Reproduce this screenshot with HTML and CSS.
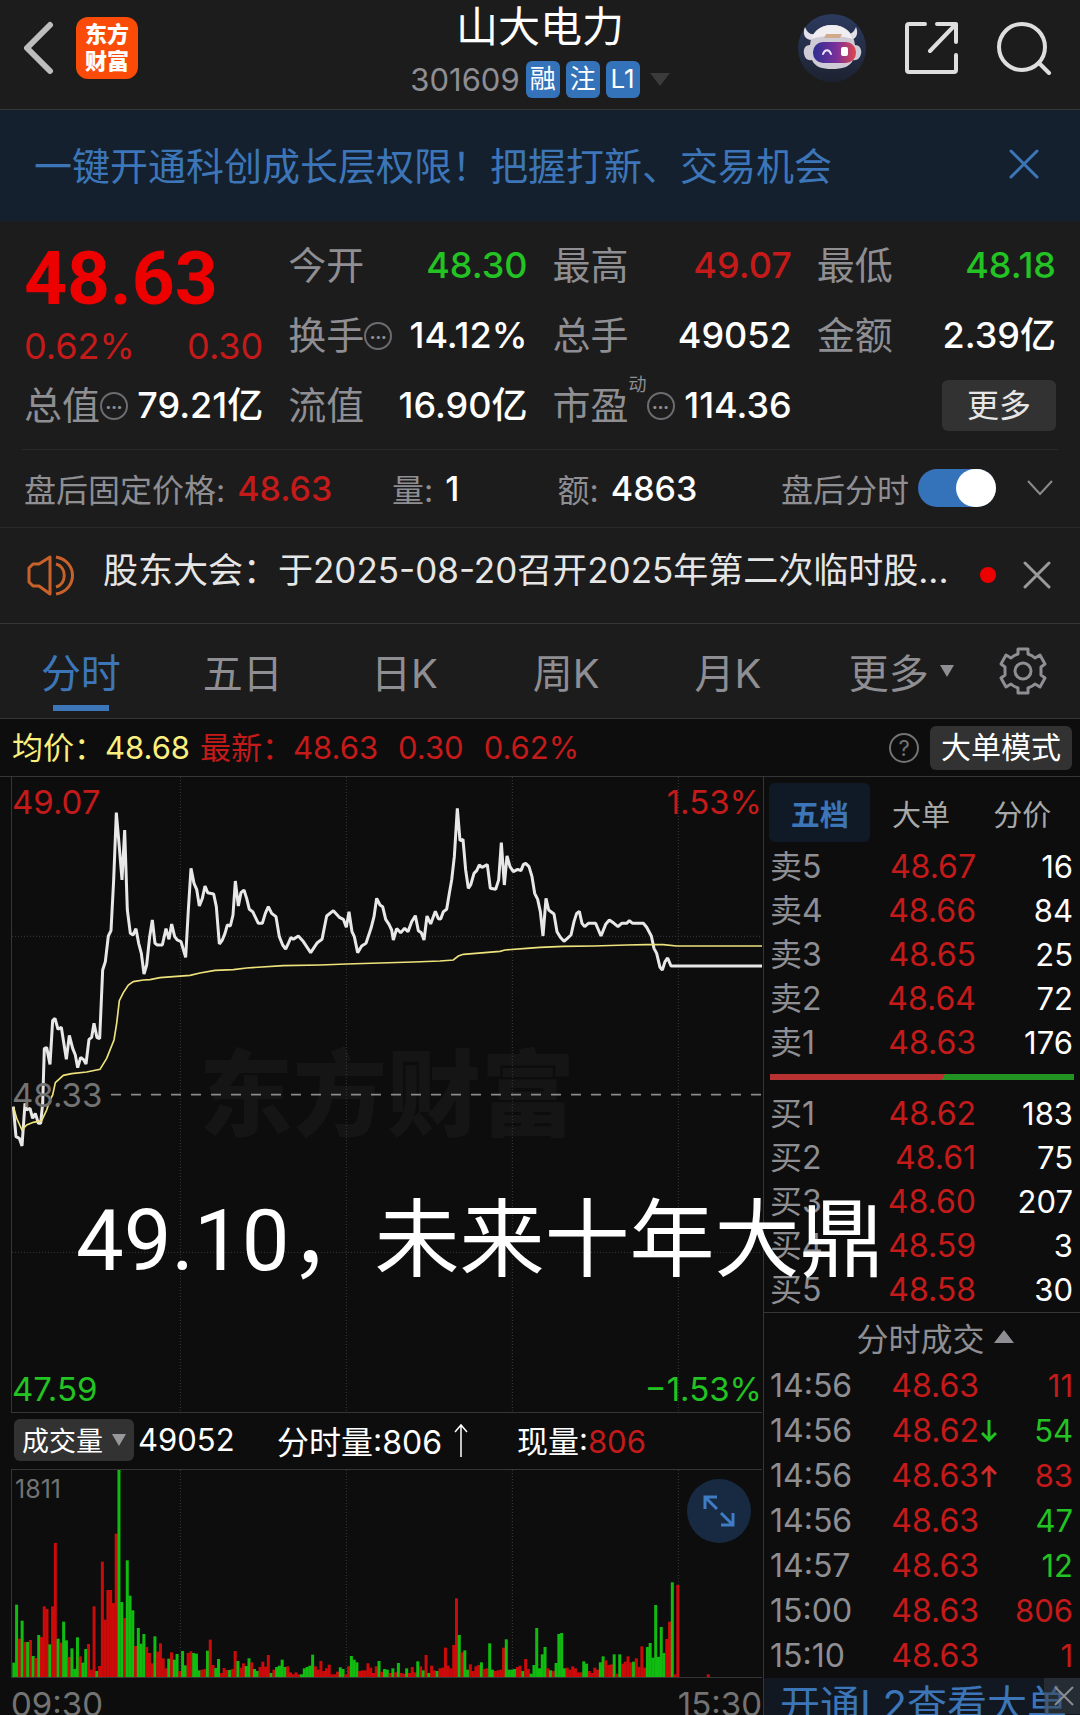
FILE: index.html
```html
<!DOCTYPE html>
<html lang="zh-CN">
<head>
<meta charset="utf-8">
<meta name="viewport" content="width=device-width, initial-scale=1">
<title>山大电力 301609</title>
<link rel="stylesheet" href="styles.css">
</head>
<body>
<header class="header">
  <div class="header-side">
    <button class="icon-btn" aria-label="返回"><svg width="32" height="54" viewBox="0 0 32 54"><path d="M27 4 4 27 27 50" fill="none" stroke="#bdbdbd" stroke-width="6" stroke-linecap="round" stroke-linejoin="round"/></svg></button>
    <a class="logo" href="#"><span>东方</span><span>财富</span></a>
  </div>
  <div class="header-title">
    <h1>山大电力</h1>
    <div class="code-row">
      <span class="code">301609</span><span class="badge">融</span><span class="badge">注</span><span class="badge">L1</span>
      <svg width="20" height="13" viewBox="0 0 20 13"><path d="M0 0h20L10 13z" fill="#3b3b3b"/></svg>
    </div>
  </div>
  <div class="header-side header-actions">
    <button class="icon-btn" aria-label="智能助手">
      <svg width="68" height="68" viewBox="0 0 68 68">
        <defs>
          <linearGradient id="visor" x1="0" x2="1"><stop offset="0" stop-color="#2c2f93"/><stop offset=".55" stop-color="#7b2f9a"/><stop offset="1" stop-color="#e0484c"/></linearGradient>
          <linearGradient id="disc" x1="0" x2="0" y1="0" y2="1"><stop offset="0" stop-color="#2c3a5e"/><stop offset="1" stop-color="#1c2231"/></linearGradient>
        </defs>
        <circle cx="34" cy="34" r="34" fill="url(#disc)"/>
        <path d="M7 13c-3 7 0 13 7 13l3-6c-5 1-8-2-10-7zM58 13c3 7 0 13-7 13l-3-6c5 1 8-2 10-7z" fill="#e4e0ea"/>
        <path d="M34 11c-13 0-21 8-22 20-5 0-7 4-6 9s4 7 8 6c3 7 10 9 20 9s18-2 21-9c4 1 7-2 8-6s-1-9-6-9c-1-12-10-20-23-20z" fill="#cfcbd6"/>
        <path d="M34 11c-11 0-18 6-21 14 12-4 30-4 42 0-3-8-10-14-21-14z" fill="#f1eef2"/>
        <path d="M28 20h16l-2 4H26z" fill="#d3a98d"/>
        <rect x="15" y="28" width="43" height="21" rx="10" fill="url(#visor)"/>
        <path d="M25 40c2-5 6-5 8 0" fill="none" stroke="#e8e6ff" stroke-width="2" stroke-linecap="round"/>
        <rect x="43" y="33" width="7" height="9" rx="2" fill="#fff"/>
      </svg>
    </button>
    <button class="icon-btn" aria-label="分享"><svg width="54" height="54" viewBox="0 0 54 54" fill="none" stroke="#dedede" stroke-width="4" stroke-linecap="round" stroke-linejoin="round"><path d="M21 3H5a2 2 0 0 0-2 2v44a2 2 0 0 0 2 2h45a2 2 0 0 0 2-2V34M33 3h19v18M52 3 26 30"/></svg></button>
    <button class="icon-btn" aria-label="搜索"><svg width="56" height="54" viewBox="0 0 56 54" fill="none" stroke="#dedede" stroke-width="4" stroke-linecap="round"><circle cx="26" cy="26" r="23"/><path d="m43 42 10 10"/></svg></button>
  </div>
</header>

<div class="banner">
  <a href="#">一键开通科创成长层权限！把握打新、交易机会</a>
  <button class="icon-btn" aria-label="关闭"><svg width="30" height="30" viewBox="0 0 30 30"><path d="m2 2 26 26M28 2 2 28" stroke="#3c76b8" stroke-width="3" stroke-linecap="round"/></svg></button>
</div>

<section class="quote">
  <div class="quote-price">
    <strong>48.63</strong>
    <div class="change"><span>0.62%</span><span>0.30</span></div>
  </div>
  <div class="stat"><span>今开</span><b class="green">48.30</b></div>
  <div class="stat"><span>最高</span><b class="red">49.07</b></div>
  <div class="stat"><span>最低</span><b class="green">48.18</b></div>
  <div class="stat"><span>换手<i class="dots">•••</i></span><b>14.12%</b></div>
  <div class="stat"><span>总手</span><b>49052</b></div>
  <div class="stat"><span>金额</span><b>2.39亿</b></div>
  <div class="stat"><span>总值<i class="dots">•••</i></span><b>79.21亿</b></div>
  <div class="stat"><span>流值</span><b>16.90亿</b></div>
  <div class="stat"><span>市盈<sup>动</sup><i class="dots">•••</i></span><b>114.36</b></div>
  <div class="stat stat-more"><button class="more-btn">更多</button></div>
</section>

<section class="after-hours">
  <div><span>盘后固定价格:</span><b class="red">48.63</b></div>
  <div><span>量:</span><b>1</b></div>
  <div><span>额:</span><b>4863</b></div>
  <label class="toggle-label">盘后分时<input class="toggle" type="checkbox" checked></label>
  <button class="icon-btn" aria-label="展开"><svg width="28" height="18" viewBox="0 0 28 18"><path d="m2 2 12 13L26 2" fill="none" stroke="#8a8a8e" stroke-width="2"/></svg></button>
</section>

<section class="notice">
  <svg width="48" height="42" viewBox="0 0 48 42" fill="none" stroke="#c9622a" stroke-width="3" stroke-linejoin="round"><path d="M23 3v37l-11-8H6l-4-4V14l4-4h6z"/><path d="M29 10c11 3 11 20 0 23M29 3c22 4 22 33 0 37"/></svg>
  <a href="#">股东大会：于2025-08-20召开2025年第二次临时股...</a>
  <i class="red-dot"></i>
  <button class="icon-btn" aria-label="关闭公告"><svg width="28" height="28" viewBox="0 0 28 28"><path d="m2 2 24 24M26 2 2 26" stroke="#9a9a9a" stroke-width="3" stroke-linecap="round"/></svg></button>
</section>

<nav class="tabs">
  <button class="tab active">分时</button>
  <button class="tab">五日</button>
  <button class="tab">日K</button>
  <button class="tab">周K</button>
  <button class="tab">月K</button>
  <button class="tab">更多<svg width="14" height="12" viewBox="0 0 14 12"><path d="M0 0h14L7 12z" fill="#8e8e93"/></svg></button>
  <button class="icon-btn" aria-label="设置"><svg width="48" height="50" viewBox="0 0 48 50" fill="none" stroke="#8e8e93" stroke-width="3" stroke-linejoin="round"><path d="M19 3h10v5c3 1 5 2 7 4l5-3 5 9-4 3v8l4 3-5 9-5-3c-2 2-4 3-7 4v5H19v-5c-3-1-5-2-7-4l-5 3-5-9 4-3v-8l-4-3 5-9 5 3c2-2 4-3 7-4z"/><circle cx="24" cy="25" r="8"/></svg></button>
</nav>

<div class="info">
  <span class="yellow">均价：48.68</span>
  <span class="red">最新：48.63</span>
  <span class="red">0.30</span>
  <span class="red">0.62%</span>
  <button class="help" aria-label="帮助">?</button>
  <button class="mode-btn">大单模式</button>
</div>

<main class="board">
  <section class="charts">
    <div class="plot price-plot">
      <span class="watermark">东方财富</span>
      <svg viewBox="36 21 2250 1905">
        <g class="grid-lines">
          <path d="M541 21V1926M1039 21V1926M1537 21V1926M2035 21V1926M36 499H2286M36 1447H2286"/>
        </g>
        <path class="base-line" d="M333 974H2286"/>
        <polyline id="price" class="price-line"/>
        <polyline id="average" class="average-line"/>
      </svg>
      <span class="mark top-left red">49.07</span>
      <span class="mark top-right red">1.53%</span>
      <span class="mark middle-left">48.33</span>
      <span class="mark bottom-left green">47.59</span>
      <span class="mark bottom-right green">−1.53%</span>
    </div>
    <div class="volume-head">
      <button class="volume-btn">成交量<svg width="14" height="12" viewBox="0 0 14 12"><path d="M0 0h14L7 12z" fill="#98989c"/></svg></button>
      <span class="total">49052</span>
      <span class="minute">分时量:806<svg width="14" height="34" viewBox="0 0 14 34"><path d="M7 34V3M1 9l6-7 6 7" fill="none" stroke="#fff" stroke-width="1.5"/></svg></span>
      <span>现量:<em class="red">806</em></span>
    </div>
    <div class="plot volume-plot">
      <svg viewBox="36 267 2250 621">
        <g class="grid-lines"><path d="M541 267V888M1039 267V888M1537 267V888M2035 267V888"/></g>
        <g id="volume"></g>
      </svg>
      <span class="peak">1811</span>
      <button class="expand" aria-label="全屏"><svg width="32" height="32" viewBox="0 0 32 32" fill="none" stroke="#3f7cc4" stroke-width="3"><path d="M2 14V2h12M2 2l12 12M18 18l12 12M30 18v12H18"/></svg></button>
    </div>
    <div class="axis"><span>09:30</span><span>15:30</span></div>
  </section>

  <aside class="panel">
    <div class="panel-tabs">
      <button class="active">五档</button><button>大单</button><button>分价</button>
    </div>
    <table class="book">
      <tr><th>卖5</th><td class="red">48.67</td><td>16</td></tr>
      <tr><th>卖4</th><td class="red">48.66</td><td>84</td></tr>
      <tr><th>卖3</th><td class="red">48.65</td><td>25</td></tr>
      <tr><th>卖2</th><td class="red">48.64</td><td>72</td></tr>
      <tr><th>卖1</th><td class="red">48.63</td><td>176</td></tr>
    </table>
    <div class="ratio"></div>
    <table class="book">
      <tr><th>买1</th><td class="red">48.62</td><td>183</td></tr>
      <tr><th>买2</th><td class="red">48.61</td><td>75</td></tr>
      <tr><th>买3</th><td class="red">48.60</td><td>207</td></tr>
      <tr><th>买4</th><td class="red">48.59</td><td>3</td></tr>
      <tr><th>买5</th><td class="red">48.58</td><td>30</td></tr>
    </table>
    <button class="trades-head">分时成交<svg width="20" height="13" viewBox="0 0 20 13"><path d="M0 13h20L10 0z" fill="#8e8e93"/></svg></button>
    <table class="trades">
      <tr><th>14:56</th><td class="red">48.63</td><td></td><td class="red">11</td></tr>
      <tr><th>14:56</th><td class="red">48.62</td><td><svg width="16" height="22" viewBox="0 0 16 22"><path d="M8 0v20M1 13l7 7 7-7" fill="none" stroke="#22c322" stroke-width="3"/></svg></td><td class="green">54</td></tr>
      <tr><th>14:56</th><td class="red">48.63</td><td><svg width="16" height="22" viewBox="0 0 16 22"><path d="M8 22V2M1 9l7-7 7 7" fill="none" stroke="#d42a2a" stroke-width="3"/></svg></td><td class="red">83</td></tr>
      <tr><th>14:56</th><td class="red">48.63</td><td></td><td class="green">47</td></tr>
      <tr><th>14:57</th><td class="red">48.63</td><td></td><td class="green">12</td></tr>
      <tr><th>15:00</th><td class="red">48.63</td><td></td><td class="red">806</td></tr>
      <tr><th>15:10</th><td class="red">48.63</td><td></td><td class="red">1</td></tr>
    </table>
    <div class="promo">
      <a href="#">开通L2查看大单</a>
      <button aria-label="关闭推广"><svg width="20" height="20" viewBox="0 0 20 20"><path d="m1 1 18 18M19 1 1 19" stroke="#8a8d91" stroke-width="2"/></svg></button>
    </div>
  </aside>

  <p class="caption">49.10，未来十年大鼎</p>
</main>
<script src="charts.js"></script>
</body>
</html>
```

FILE: styles.css
```css
* { box-sizing: border-box; }

body {
  margin: 0;
  height: 100vh;
  overflow: hidden;
  display: flex;
  flex-direction: column;
  background: #0d0d0d;
  color: #fff;
  font-family: Inter, "Noto Sans CJK SC", sans-serif;
}

button {
  font: inherit;
  color: inherit;
  background: none;
  border: 0;
  padding: 0;
}

a { color: inherit; text-decoration: none; }
svg { display: block; flex: none; }
em, i { font-style: normal; }
b { font-weight: 500; }

.red { color: #c41a1a; }
.green { color: #22c322; }
.yellow { color: #fbf07e; }

.icon-btn { display: flex; align-items: center; justify-content: center; }

/* Header */
.header {
  flex: none;
  height: 110px;
  display: grid;
  grid-template-columns: 1fr auto 1fr;
  align-items: start;
  background: #1c1c1c;
  border-bottom: 1px solid #363636;
}

.header-side { display: flex; align-items: center; height: 96px; padding-left: 23px; gap: 21px; }
.header-actions { justify-content: flex-end; gap: 38px; padding: 0 28px 0 0; }

.logo {
  width: 62px;
  height: 62px;
  border-radius: 12px;
  background: #fb4b08;
  display: flex;
  flex-direction: column;
  align-items: center;
  justify-content: center;
  font-size: 22px;
  line-height: 27px;
  font-weight: 900;
}

h1 { margin: 0; font-size: 42px; line-height: 54px; font-weight: 400; text-align: center; }
.code-row { display: flex; align-items: center; gap: 6px; height: 50px; }
.code { font-size: 31px; color: #8e8e93; }
.badge {
  min-width: 34px;
  height: 37px;
  border-radius: 6px;
  background: #3472ba;
  font-size: 26px;
  line-height: 36px;
  text-align: center;
}
.code-row svg { margin-left: 4px; }

/* Banner */
.banner {
  flex: none;
  height: 111px;
  padding: 0 41px 4px 34px;
  display: flex;
  align-items: center;
  justify-content: space-between;
  background: #14202e;
  color: #3c76b8;
  font-size: 38px;
}

/* Quote */
.quote {
  flex: none;
  padding: 10px 24px 8px;
  display: grid;
  grid-template-columns: repeat(4, 1fr);
  grid-template-rows: repeat(3, 70px);
  column-gap: 25px;
  background: #1c1c1c;
}
.quote-price { grid-row: span 2; padding-top: 13px; color: #ec0000; }
.quote-price strong { display: block; font: 700 75px/68px Roboto, sans-serif; }
.change { display: flex; justify-content: space-between; font-size: 36px; line-height: 68px; color: #c41a1a; }
.stat { display: flex; align-items: center; justify-content: space-between; white-space: nowrap; font-size: 38px; line-height: 69px; height: 69px; }
.stat > span { display: flex; align-items: center; color: #8e8e93; }
.stat b { font-size: 36px; }
.stat sup { align-self: flex-start; font-size: 18px; line-height: 28px; }
.dots {
  width: 28px;
  height: 28px;
  border: 2px solid #6c6c70;
  border-radius: 50%;
  font-size: 10px;
  line-height: 24px;
  text-align: center;
}
.stat-more { justify-content: flex-end; }
.more-btn {
  width: 114px;
  height: 51px;
  border-radius: 6px;
  background: #323232;
  color: #e6e6e6;
  font-size: 32px;
  line-height: 50px;
}

/* After-hours trading */
.after-hours {
  flex: none;
  height: 79px;
  padding: 0 26px 0 24px;
  display: grid;
  grid-template-columns: 369fr 166fr 224fr auto auto;
  align-items: center;
  background: linear-gradient(#2a2a2a, #2a2a2a) center top / calc(100% - 44px) 1px no-repeat #1c1c1c;
  border-bottom: 1px solid #2a2a2a;
  color: #8e8e93;
  font-size: 32px;
}
.after-hours > div { display: flex; align-items: center; gap: 12px; white-space: nowrap; }
.after-hours b { font-size: 34px; }
.after-hours b:not(.red) { color: #fff; }
.toggle-label { display: flex; align-items: center; gap: 9px; margin-right: 30px; }
.toggle {
  appearance: none;
  margin: 0;
  width: 78px;
  height: 38px;
  border-radius: 19px;
  background: #3472ba;
  display: flex;
  justify-content: flex-end;
}
.toggle::before { content: ""; width: 40px; height: 38px; border-radius: 19px; background: #fff; }

/* Notice */
.notice {
  flex: none;
  height: 96px;
  padding: 0 29px 2px 27px;
  display: flex;
  align-items: center;
  background: #1c1c1c;
  border-bottom: 1px solid #363636;
}
.notice a { flex: 1; padding: 0 0 14px 28px; font-size: 35px; color: #e6e6e6; white-space: nowrap; }
.red-dot { width: 16px; height: 16px; margin-right: 27px; border-radius: 50%; background: #ec0000; }

/* Period tabs */
.tabs {
  flex: none;
  height: 95px;
  padding-right: 28px;
  display: grid;
  grid-template-columns: repeat(5, 161fr) 184fr 58fr;
  background: #1c1c1c;
  border-bottom: 1px solid #363636;
}
.tab {
  display: flex;
  align-items: center;
  justify-content: center;
  gap: 11px;
  font-size: 40px;
  color: #8e8e93;
}
.tab.active {
  color: #3c76b8;
  background: linear-gradient(#3c76b8, #3c76b8) center bottom 7px / 56px 6px no-repeat;
}

/* Price summary */
.info {
  flex: none;
  height: 58px;
  padding: 0 8px 0 12px;
  display: flex;
  align-items: center;
  gap: 20px;
  border-bottom: 1px solid #363636;
  font-size: 31px;
  line-height: 58px;
  white-space: nowrap;
}
.info .yellow { margin-right: -10px; }
.help {
  width: 30px;
  height: 30px;
  margin: 0 -9px 0 auto;
  border: 2px solid #737373;
  border-radius: 50%;
  color: #737373;
  font-size: 22px;
  line-height: 26px;
}
.mode-btn {
  width: 142px;
  height: 44px;
  border-radius: 6px;
  background: #323232;
  font-size: 30px;
  line-height: 43px;
}

/* Chart board */
.board {
  position: relative;
  flex: 1;
  min-height: 0;
  display: grid;
  grid-template-columns: minmax(0, 1fr) 317px;
}
.charts { padding: 0 1px 0 11px; }
.plot { position: relative; border: solid #363636; border-width: 0 0 1px 1px; }
.plot svg { width: 100%; height: auto; }
.price-plot > svg, .volume-plot > svg { position: relative; }
.volume-plot { border-top-width: 1px; }

.grid-lines { fill: none; stroke: #3a3a3a; stroke-width: 3; stroke-dasharray: 3 6; }
.base-line { stroke: #8a8a8a; stroke-width: 5; stroke-dasharray: 30 30; }
.price-line { fill: none; stroke: #e8e8e8; stroke-width: 9; stroke-linejoin: bevel; }
.average-line { fill: none; stroke: #eee27c; stroke-width: 5; }

.mark { position: absolute; font-size: 33px; line-height: 38px; }
.top-left { top: 6px; left: 0; }
.top-right { top: 6px; right: 0; }
.middle-left { top: 50%; left: 0; color: #737373; margin-top: -19px; }
.bottom-left { bottom: 4px; left: 0; }
.bottom-right { bottom: 4px; right: 0; }
.watermark {
  position: absolute;
  top: 49%;
  left: 50%;
  transform: translate(-50%, -50%);
  font-size: 94px;
  font-weight: 900;
  color: #151515;
  white-space: nowrap;
}

.volume-head { height: 56px; padding: 0 0 3px 3px; display: flex; align-items: center; font-size: 31px; white-space: nowrap; }
.volume-btn {
  display: flex;
  align-items: center;
  justify-content: center;
  gap: 9px;
  width: 120px;
  height: 42px;
  border-radius: 6px;
  background: #323232;
  font-size: 27px;
}
.total { width: 143px; padding-left: 4px; }
.minute { display: flex; align-items: center; gap: 12px; width: 240px; font-size: 32px; }

.peak { position: absolute; top: 4px; left: 3px; font-size: 25px; line-height: 30px; color: #737373; }
.expand {
  position: absolute;
  top: 9px;
  right: 11px;
  width: 64px;
  height: 64px;
  border-radius: 50%;
  background: #172a42;
  display: grid;
  place-items: center;
}
.plot .expand svg { width: 32px; }
.axis { display: flex; justify-content: space-between; padding-top: 6px; font-size: 33px; line-height: 40px; color: #737373; }

/* Order book */
.panel { border-left: 1px solid #363636; overflow: hidden; display: flex; flex-direction: column; }
.panel > * { flex: none; }
.panel-tabs { display: grid; grid-template-columns: repeat(3, 1fr); height: 59px; margin: 6px 7px 3px 5px; font-size: 29px; color: #a8a8a8; }
.panel-tabs .active { border-radius: 6px; background: #101a26; color: #3c76b8; font-weight: 700; }

table { table-layout: fixed; border-collapse: collapse; width: calc(100% - 13px); margin: 0 7px 0 6px; font-size: 32px; }
th, td { padding: 0; font-weight: 400; text-align: right; line-height: 44px; height: 44px; white-space: nowrap; }
th { text-align: left; color: #8e8e93; width: 90px; }
td:last-child { font-size: 31px; }
.book td:nth-child(2) { width: 116px; }
.trades th, .trades td { height: 45px; line-height: 44px; }
.trades td:nth-child(2) { width: 119px; }
.trades td:nth-child(3) { width: 20px; padding-left: 2px; }

.ratio { height: 6px; margin: 9px 6px 12px; background: linear-gradient(120deg, #b83232 57%, #229322 57%); }
.trades-head {
  height: 51px;
  padding: 0 6px 3px 32px;
  border-top: 1px solid #363636;
  display: flex;
  align-items: center;
  justify-content: center;
  gap: 9px;
  font-size: 32px;
  color: #8e8e93;
}

.promo { position: relative; height: 60px; padding-left: 16px; background: #111821; color: #3c76b8; font-size: 40px; line-height: 54px; white-space: nowrap; }
.promo button { position: absolute; top: 0; right: 0; width: 36px; height: 36px; padding-left: 10px; background: rgba(60, 64, 70, .5); }

.caption {
  position: absolute;
  top: 414px;
  left: 76px;
  margin: 0;
  font: 85px/100px Roboto, "Noto Sans CJK SC", sans-serif;
  white-space: nowrap;
}
```

FILE: charts.js
```js
const price = `40,1010 48,1100 58,1105 66,1128 75,1000 80,1020 90,1015 98,1045 106,1030 115,1060 122,1060 128,1000 133,835 140,833 150,883 158,752 165,745 174,778 184,772 199,868 208,796 218,835 226,855 233,893 242,862 250,868 258,882 267,808 275,802 282,760 291,803 299,806 308,600 316,575 325,498 333,482 341,330 349,128 357,220 366,330 374,180 382,420 391,490 399,495 408,476 416,520 424,550 432,612 440,585 449,500 457,450 465,520 472,525 487,525 498,476 507,508 515,462 524,500 532,510 543,515 557,562 565,420 573,295 582,340 590,358 598,408 607,385 615,348 623,368 641,372 649,410 658,522 667,510 675,490 682,465 691,468 699,435 706,333 715,408 723,368 732,360 740,385 748,418 758,425 775,460 787,460 796,430 805,410 815,430 828,440 838,500 848,525 857,537 865,520 873,502 880,508 895,498 908,512 932,548 952,518 966,508 980,438 1000,422 1018,442 1030,448 1039,472 1047,425 1056,485 1063,500 1073,548 1085,528 1098,520 1113,475 1122,440 1130,385 1140,405 1148,410 1157,448 1167,463 1175,480 1180,510 1190,476 1202,488 1214,475 1224,485 1235,455 1246,437 1255,482 1264,488 1272,510 1281,438 1292,462 1306,424 1315,446 1322,447 1330,425 1340,418 1348,370 1355,330 1363,260 1372,115 1380,212 1389,208 1397,300 1405,355 1412,345 1422,310 1430,302 1438,285 1446,292 1462,284 1471,355 1487,358 1496,330 1504,218 1513,345 1521,258 1530,290 1540,305 1553,298 1563,302 1570,284 1577,280 1587,290 1596,320 1604,370 1613,388 1621,425 1629,498 1638,385 1646,420 1662,432 1671,485 1681,502 1692,514 1702,505 1713,495 1722,455 1730,430 1738,424 1746,460 1754,470 1765,460 1787,460 1803,498 1817,463 1828,450 1842,460 1854,470 1865,460 1880,460 1888,452 1898,460 1930,460 1940,472 1954,498 1962,535 1970,550 1980,592 1987,600 1995,575 2003,564 2013,588 2286,588`;

const average = `40,1010 50,1045 66,1080 80,1065 100,1057 125,1052 140,1020 150,990 158,975 166,938 190,916 215,911 260,906 300,898 320,865 342,810 350,760 358,692 370,668 385,645 400,635 430,630 450,629 480,623 570,616 600,609 645,601 700,599 740,594 850,587 960,585 1040,582 1140,579 1240,576 1320,573 1360,570 1375,558 1390,553 1500,544 1515,540 1580,535 1620,532 1690,529 1780,528 1880,525 1940,524 1990,524 2030,528 2286,528`;

// One entry per minute: direction (g = down, r = up) and bar height.
const volume = `g43 g217 r115 g169 r105 g105 r111 g63 r57 g126 r120 r212 r204 g98 r212 r402 g115 r103 g166 g110
r60 g86 g24 g119 r62 g43 g84 r99 r22 r212 g18 r33 r346 r172 r261 r261 r222 r430 g621 g225
r177 g350 g244 g200 r93 g147 g100 g129 r90 r72 r41 g122 r76 r101 r56 r26 g55 r74 g52 g69
r18 g78 g35 r72 r77 g72 g70 g20 r22 r24 g79 r112 r36 g27 g54 r12 r27 r21 g21 r24
r78 g48 r28 r41 g33 g56 r44 g24 g18 r30 r46 r31 r66 g12 r22 g30 g34 g52 g30 r32
r14 r8 r14 r8 g8 g26 g30 g34 g67 r32 r22 r48 r18 r26 r37 r8 r8 r16 g29 g24
r8 r32 g63 g52 g44 r18 r20 r20 r41 r28 r12 r32 g48 r16 g24 g22 r12 g26 r14 g42
r12 r10 g26 r12 r30 r14 g47 r32 g20 r66 g12 r34 r20 g18 r26 r28 r88 r34 r26 r96
r236 g126 r74 g80 g22 r38 r18 r32 r36 g44 r24 r26 g101 g22 r18 r20 r22 r88 g113 g22
g22 g24 r30 r34 g18 r54 r24 g10 g36 g147 g26 g68 g90 r26 g20 r18 g42 g129 g132 g26
r28 r22 r32 r26 r14 r14 g47 g40 r18 r12 r28 r22 g44 g62 r50 r36 r38 g68 r10 g68
r40 r46 r62 r44 g46 r56 r30 r92 r28 g90 g102 g58 g216 g60 g150 g72 r114 r166 g284 r8
r276 r0 r0 r0 r0 r0 r0 r0 r0 r0 r0 r8`.split(/\s+/);

document.getElementById('price').setAttribute('points', price);
document.getElementById('average').setAttribute('points', average);

const base = 888;
const colors = { g: '#12cf12', r: '#e00a0a' };
document.getElementById('volume').innerHTML = volume.map((entry, minute) => {
  const height = Number(entry.slice(1));
  const x = 37 + minute * 8.3;
  return `<rect x="${x.toFixed(1)}" y="${base - height}" width="9" height="${height}" fill="${colors[entry[0]]}" fill-opacity="0.9"/>`;
}).join('');
```
